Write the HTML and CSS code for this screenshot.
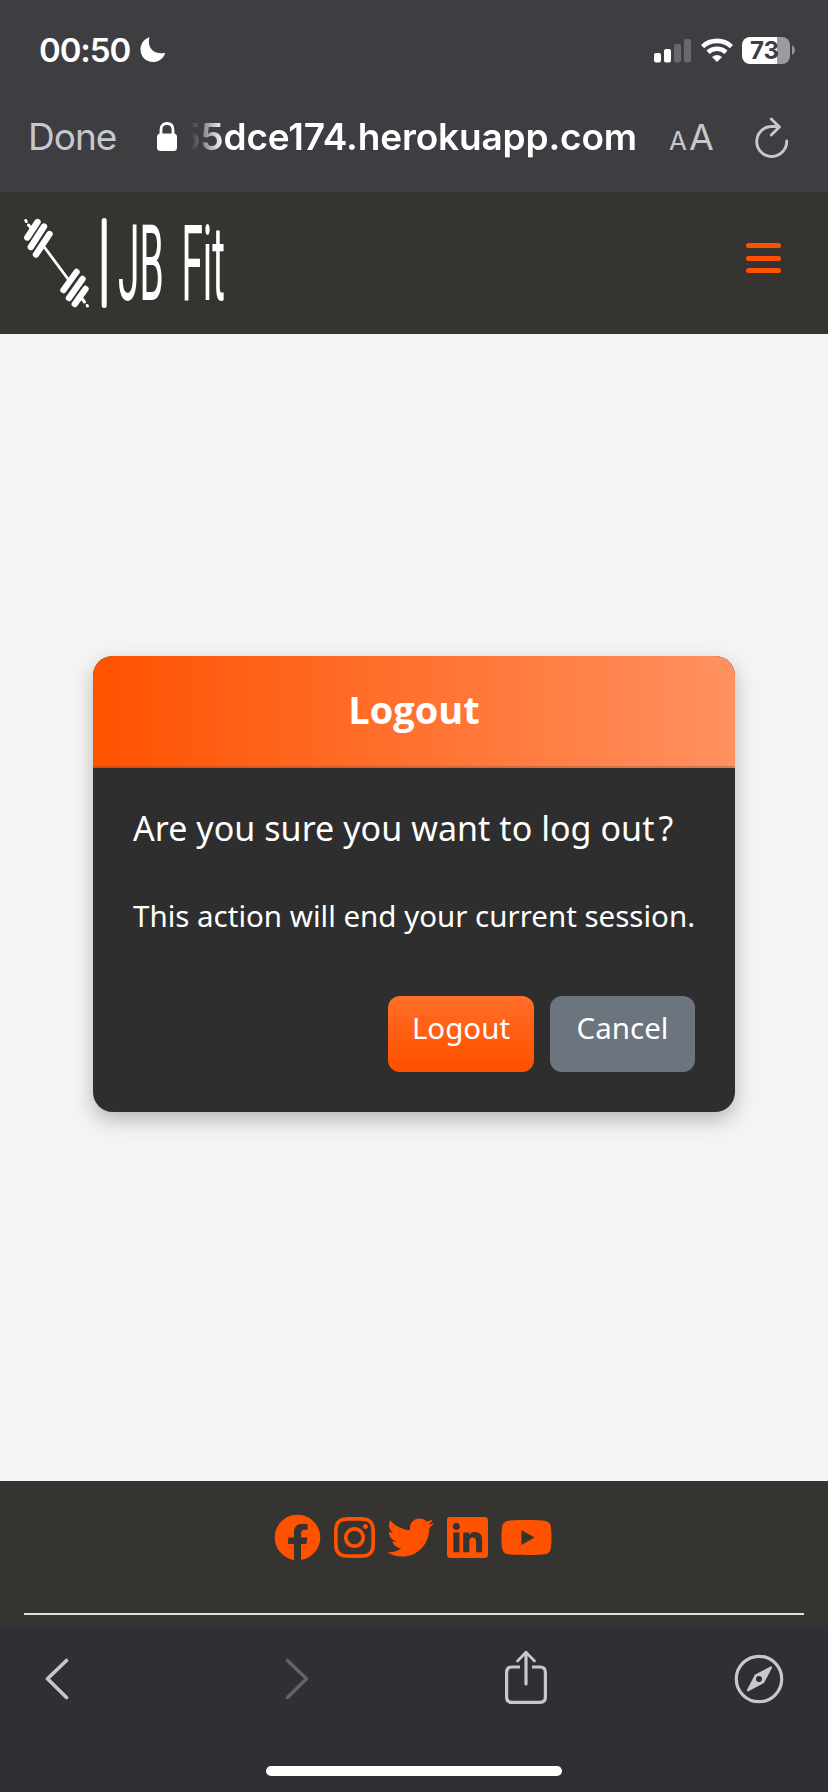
FILE: index.html
```html
<!DOCTYPE html>
<html lang="en">
<head>
<meta charset="utf-8">
<title>JB Fit - Logout</title>
<link rel="stylesheet" href="styles.css">
</head>
<body>
<div class="screen">
  <div class="chrome">
    <div class="status">
      <span class="time">00:50</span>
      <svg class="moon" width="26" height="26" viewBox="0 0 26 26"><path d="M9.500.3C7 8.700 11.500 17.800 24 15.900Q25.500 15.600 24.600 17.500C22.500 22.400 18 25 13 25C6 25 .5 19.500 .5 12.700C.5 7 3.500 2.500 8.600.4Q9.500 0 9.500.3Z" fill="#fff"/></svg>
      <svg class="signal" width="38" height="24" viewBox="0 0 38 24"><g fill="#fff"><rect y="14" width="7" height="9.500" rx="2"/><rect x="10" y="10" width="7" height="13.500" rx="2"/></g><g fill="#68696c"><rect x="20" y="5" width="7" height="18.500" rx="2"/><rect x="30" width="7" height="23.500" rx="2"/></g></svg>
      <svg class="wifi" width="32" height="24" viewBox="0 0 32 24"><g fill="none" stroke="#fff" stroke-width="4.600"><path d="M1.600 8.600A21 21 0 0 1 30.400 8.600"/><path d="M7 14.300A13.300 13.300 0 0 1 25 14.300"/></g><path d="M11 18.900Q16 15.200 21 18.900L16 24Z" fill="#fff"/></svg>
      <div class="battery"><span>73</span></div>
      <svg class="battery-tip" width="3" height="10" viewBox="0 0 3 10"><path d="M0 0Q3 2 3 5T0 10Z" fill="#98989b"/></svg>
    </div>
    <div class="address">
      <span class="done">Done</span>
      <svg class="lock" width="20" height="30" viewBox="0 0 20 30"><path d="M4 13V8Q4 1.500 10 1.500T16 8V13" fill="none" stroke="#fff" stroke-width="2.800"/><rect y="11.500" width="20" height="17.500" rx="3.500" fill="#fff"/></svg>
      <div class="url"><span>55dce174.herokuapp.com</span></div>
      <div class="text-size"><span class="small-a">A</span><span class="big-a">A</span></div>
      <svg class="reload" width="34" height="42" viewBox="0 0 34 42"><g fill="none" stroke="#c7c7cc" stroke-width="2.900" stroke-linecap="round" stroke-linejoin="round"><path d="M31.700 24A15 15 0 1 1 16.700 9.500H24"/><path d="M16.300 2L24.300 10L16.300 18"/></g></svg>
    </div>
  </div>
  <header class="site-header">
    <svg class="logo" width="220" height="142" viewBox="0 -26 220 142">
      <g stroke="#fff" stroke-linecap="round" fill="none">
        <path stroke-width="2.800" d="M21 30L44 61"/>
        <path stroke-width="6.400" d="M3.300 19.500L13.500 4M6.800 29L20 8.500M12 36.500L25.500 16"/>
        <path stroke-width="6.400" d="M39.500 72L52.500 54M45 80L58.500 61M50.800 86L61.500 71"/>
        <path stroke-width="3" d="M1.800 2.500L2.200 3.500M4.500 7L8 11M57.500 80L60.500 84M63.200 87.500L63.400 88"/>
      </g>
      <rect x="77.700" y="0" width="5" height="90" rx="2.500" fill="#fff"/>
      <text class="logo-text" x="94" y="82" textLength="107" lengthAdjust="spacingAndGlyphs">JB Fit</text>
    </svg>
    <div class="menu"><i></i><i></i><i></i></div>
  </header>
  <main class="page">
    <section class="card">
      <h1 class="card-title">Logout</h1>
      <div class="card-body">
        <p class="question">Are you sure you want to log out<span class="mark">?</span></p>
        <p class="note">This action will end your current session.</p>
        <div class="actions">
          <button class="btn btn-logout">Logout</button>
          <button class="btn btn-cancel">Cancel</button>
        </div>
      </div>
    </section>
  </main>
  <footer class="site-footer">
    <div class="social">
      <svg width="47" height="47" viewBox="0 0 512 512"><path d="M504 256C504 119 393 8 256 8S8 119 8 256c0 123.780 90.690 226.380 209.250 245V327.690h-63V256h63v-54.640c0-62.150 37-96.480 93.670-96.480 27.140 0 55.520 4.840 55.520 4.840v61h-31.280c-30.800 0-40.410 19.120-40.410 38.730V256h68.780l-11 71.690h-57.780V501C413.310 482.380 504 379.780 504 256z"/></svg>
      <svg width="41" height="47" viewBox="0 0 448 512"><path d="M224.100 141c-63.600 0-114.900 51.300-114.900 114.900s51.300 114.900 114.900 114.900S339 319.500 339 255.900 287.700 141 224.100 141zm0 189.600c-41.100 0-74.700-33.500-74.700-74.700s33.500-74.700 74.700-74.700 74.700 33.500 74.700 74.700-33.600 74.700-74.700 74.700zm146.400-194.300c0 14.900-12 26.800-26.800 26.800-14.900 0-26.800-12-26.800-26.800s12-26.800 26.800-26.800 26.800 12 26.800 26.800zm76.100 27.200c-1.700-35.900-9.900-67.700-36.200-93.900-26.200-26.200-58-34.400-93.900-36.200-37-2.100-147.900-2.100-184.900 0-35.800 1.700-67.600 9.900-93.900 36.100s-34.400 58-36.200 93.900c-2.100 37-2.100 147.900 0 184.900 1.700 35.900 9.900 67.700 36.200 93.900s58 34.400 93.900 36.200c37 2.100 147.900 2.100 184.900 0 35.900-1.700 67.700-9.900 93.900-36.200 26.200-26.200 34.400-58 36.200-93.900 2.100-37 2.100-147.800 0-184.800zM398.800 388c-7.800 19.600-22.900 34.700-42.600 42.600-29.500 11.700-99.500 9-132.100 9s-102.700 2.600-132.100-9c-19.600-7.800-34.700-22.900-42.600-42.600-11.700-29.500-9-99.500-9-132.100s-2.600-102.700 9-132.100c7.800-19.600 22.900-34.700 42.600-42.600 29.500-11.700 99.500-9 132.100-9s102.700-2.600 132.100 9c19.600 7.800 34.700 22.900 42.600 42.600 11.700 29.500 9 99.500 9 132.100s2.700 102.700-9 132.100z"/></svg>
      <svg width="47" height="47" viewBox="0 0 512 512"><path d="M459.370 151.716c.325 4.548.325 9.097.325 13.645 0 138.720-105.583 298.558-298.558 298.558-59.452 0-114.680-17.219-161.137-47.106 8.447.974 16.568 1.299 25.340 1.299 49.055 0 94.213-16.568 130.274-44.832-46.132-.975-84.792-31.188-98.112-72.772 6.498.974 12.995 1.624 19.818 1.624 9.421 0 18.843-1.300 27.614-3.573-48.081-9.747-84.143-51.980-84.143-102.985v-1.299c13.969 7.797 30.214 12.670 47.431 13.319-28.264-18.843-46.781-51.005-46.781-87.391 0-19.492 5.197-37.360 14.294-52.954 51.655 63.675 129.300 105.258 216.365 109.807-1.624-7.797-2.599-15.918-2.599-24.040 0-57.828 46.782-104.934 104.934-104.934 30.213 0 57.502 12.670 76.670 33.137 23.715-4.548 46.456-13.320 66.599-25.340-7.798 24.366-24.366 44.833-46.132 57.827 21.117-2.273 41.584-8.122 60.426-16.243-14.292 20.791-32.161 39.308-52.628 54.253z"/></svg>
      <svg width="41" height="47" viewBox="0 0 448 512"><path d="M416 32H31.900C14.300 32 0 46.500 0 64.300v383.400C0 465.500 14.300 480 31.900 480H416c17.600 0 32-14.500 32-32.300V64.300c0-17.800-14.400-32.300-32-32.300zM135.400 416H69V202.200h66.500V416zm-33.200-243c-21.300 0-38.500-17.300-38.500-38.500S80.900 96 102.200 96c21.200 0 38.500 17.300 38.500 38.500 0 21.300-17.200 38.500-38.500 38.500zm282.100 243h-66.400V312c0-24.800-.5-56.700-34.500-56.700-34.600 0-39.900 27-39.900 54.900V416h-66.400V202.200h63.700v29.200h.9c8.900-16.800 30.600-34.500 62.900-34.500 67.200 0 79.700 44.300 79.700 101.900V416z"/></svg>
      <svg width="53" height="47" viewBox="0 0 576 512"><path d="M549.655 124.083c-6.281-23.650-24.787-42.276-48.284-48.597C458.781 64 288 64 288 64S117.220 64 74.629 75.486c-23.497 6.322-42.003 24.947-48.284 48.597-11.412 42.867-11.412 132.305-11.412 132.305s0 89.438 11.412 132.305c6.281 23.650 24.787 41.500 48.284 47.821C117.220 448 288 448 288 448s170.780 0 213.371-11.486c23.497-6.321 42.003-24.171 48.284-47.821 11.412-42.867 11.412-132.305 11.412-132.305s0-89.438-11.412-132.305zm-317.510 213.508V175.185l142.739 81.205-142.739 81.201z"/></svg>
    </div>
    <hr class="rule">
  </footer>
  <nav class="toolbar">
    <div class="tools">
      <svg width="24" height="42" viewBox="0 0 24 42"><path d="M21.500 2.500L2.500 20.800L21.500 39.500" fill="none" stroke="#c7c7cc" stroke-width="3.600" stroke-linecap="round" stroke-linejoin="round"/></svg>
      <svg class="forward" width="24" height="42" viewBox="0 0 24 42"><path d="M2.500 2.500L21.500 20.800L2.500 39.500" fill="none" stroke="#626267" stroke-width="3.600" stroke-linecap="round" stroke-linejoin="round"/></svg>
      <svg class="share" width="42" height="54" viewBox="0 0 42 54"><g fill="none" stroke="#c7c7cc" stroke-width="3.200"><path d="M15 17H7Q1.600 17 1.600 22.500V47Q1.600 52.400 7 52.400H35Q40.400 52.400 40.400 47V22.500Q40.400 17 35 17H27"/><path d="M21 34V2.500" stroke-linecap="round"/><path d="M12.500 11L21 2.300L29.500 11" stroke-width="2.700" stroke-linecap="round" stroke-linejoin="round"/></g></svg>
      <svg class="compass" width="50" height="50" viewBox="0 0 50 50"><circle cx="25" cy="25" r="22.700" fill="none" stroke="#c7c7cc" stroke-width="3.200"/><path fill-rule="evenodd" fill="#c7c7cc" d="M36.500 12.600Q39 12 37.800 14.200L30 29L14.500 37.300Q12 38 13.200 35.600L21 20.500ZM25 22a3 3 0 1 0 0 6a3 3 0 1 0 0-6Z"/></svg>
    </div>
    <div class="home-indicator"></div>
  </nav>
</div>
</body>
</html>
```
FILE: styles.css
```css
* { box-sizing: border-box; }
body { margin: 0; background: #f4f4f4; }
svg { display: block; flex: none; }
.screen { width: 828px; height: 1792px; display: flex; flex-direction: column; overflow: hidden; }

.chrome { height: 192px; background: #3d3d42; color: #fff; font-family: Inter, sans-serif; }
.status { height: 98px; display: flex; align-items: center; padding: 2px 33px 0 39px; }
.time { font-size: 33px; font-weight: 600; line-height: 40px; width: 101px; white-space: nowrap; letter-spacing: -1.100px; }
.signal { margin: 1px 9px 0 auto; }
.wifi { margin-right: 9px; }
.battery { width: 48px; height: 27px; border-radius: 8px; background: linear-gradient(90deg, #fff 35px, #9c9c9f 35px); color: #3d3d42; }
.battery span { display: block; text-align: center; padding-right: 3px; font-size: 24px; font-weight: 700; line-height: 28px; }
.battery-tip { margin-left: 2px; }
.address { height: 80px; display: flex; align-items: center; padding-left: 28px; }
.done { width: 129px; margin-top: -2px; font-size: 37px; line-height: 44px; color: #c7c7cc; letter-spacing: -1px; white-space: nowrap; }
.lock { margin-top: -3px; }
.url { width: 446px; margin: -3px 0 0 14px; overflow: hidden; display: flex; justify-content: flex-end; -webkit-mask-image: linear-gradient(90deg, transparent, #000 32px); mask-image: linear-gradient(90deg, transparent, #000 32px); }
.url span { font-size: 37px; font-weight: 600; line-height: 48px; letter-spacing: -0.150px; white-space: nowrap; }
.text-size { width: 46px; margin: -2px 0 0 32px; display: flex; align-items: baseline; gap: 2px; color: #c7c7cc; }
.small-a { font-size: 26px; }
.big-a { font-size: 36px; }
.reload { margin: -1px 0 0 40px; }

.site-header { height: 142px; background: #353430; display: flex; justify-content: space-between; padding: 0 47px 0 24px; }
.logo-text { font-family: Roboto, sans-serif; font-size: 105px; word-spacing: 22px; fill: #fff; }
.menu { display: flex; flex-direction: column; gap: 7.500px; padding-top: 51px; }
.menu i { width: 35px; height: 5px; border-radius: 2.500px; background: #ff5200; }

.page { flex: 1; display: flex; justify-content: center; align-items: flex-start; padding-top: 322px; }
.card { width: 642px; height: 456px; border-radius: 20px; background: #2e2e2e; color: #fff; overflow: hidden; box-shadow: 0 8px 20px rgba(0, 0, 0, .25); font-family: "Noto Sans", sans-serif; }
.card-title { margin: 0; height: 112px; border-bottom: 2px solid rgba(46, 46, 46, .2); background: linear-gradient(90deg, #ff5200, #ff9160) border-box; text-align: center; font-family: "Open Sans", sans-serif; font-size: 38px; font-weight: 700; line-height: 107px; }
.card-body { padding: 0 40px; }
.question, .note { margin: 0; white-space: nowrap; }
.question { padding-top: 36px; font-size: 34px; line-height: 48px; letter-spacing: 0.050px; }
.mark { margin-left: 4px; }
.note { padding-top: 42px; font-size: 29.500px; line-height: 44px; }
.actions { display: flex; justify-content: flex-end; gap: 16px; padding-top: 58px; }
.btn { height: 76px; border: 0; border-radius: 12px; padding: 0 0 14px; color: #fff; font: 29.500px "Noto Sans", sans-serif; }
.btn-logout { width: 146px; background: linear-gradient(#ff6e29, #ff5200 90%); }
.btn-cancel { width: 145px; background: #6c757d; }

.site-footer { height: 145px; background: #353430; padding: 33px 24px 0; }
.social { display: flex; justify-content: center; gap: 12.500px; padding-right: 1px; fill: #ff5200; }
.rule { height: 2px; border: 0; margin: 52px 0 0; background: #dee2e6; }

.toolbar { height: 166px; background: #2f3035; padding-top: 23px; }
.tools { height: 60px; display: flex; align-items: center; padding-left: 45px; }
.forward { margin-left: 216px; }
.share { margin: -4px 0 0 196px; }
.compass { margin-left: 187px; }
.home-indicator { width: 296px; height: 10px; border-radius: 5px; background: #fff; margin: 57px auto 0; }
```
